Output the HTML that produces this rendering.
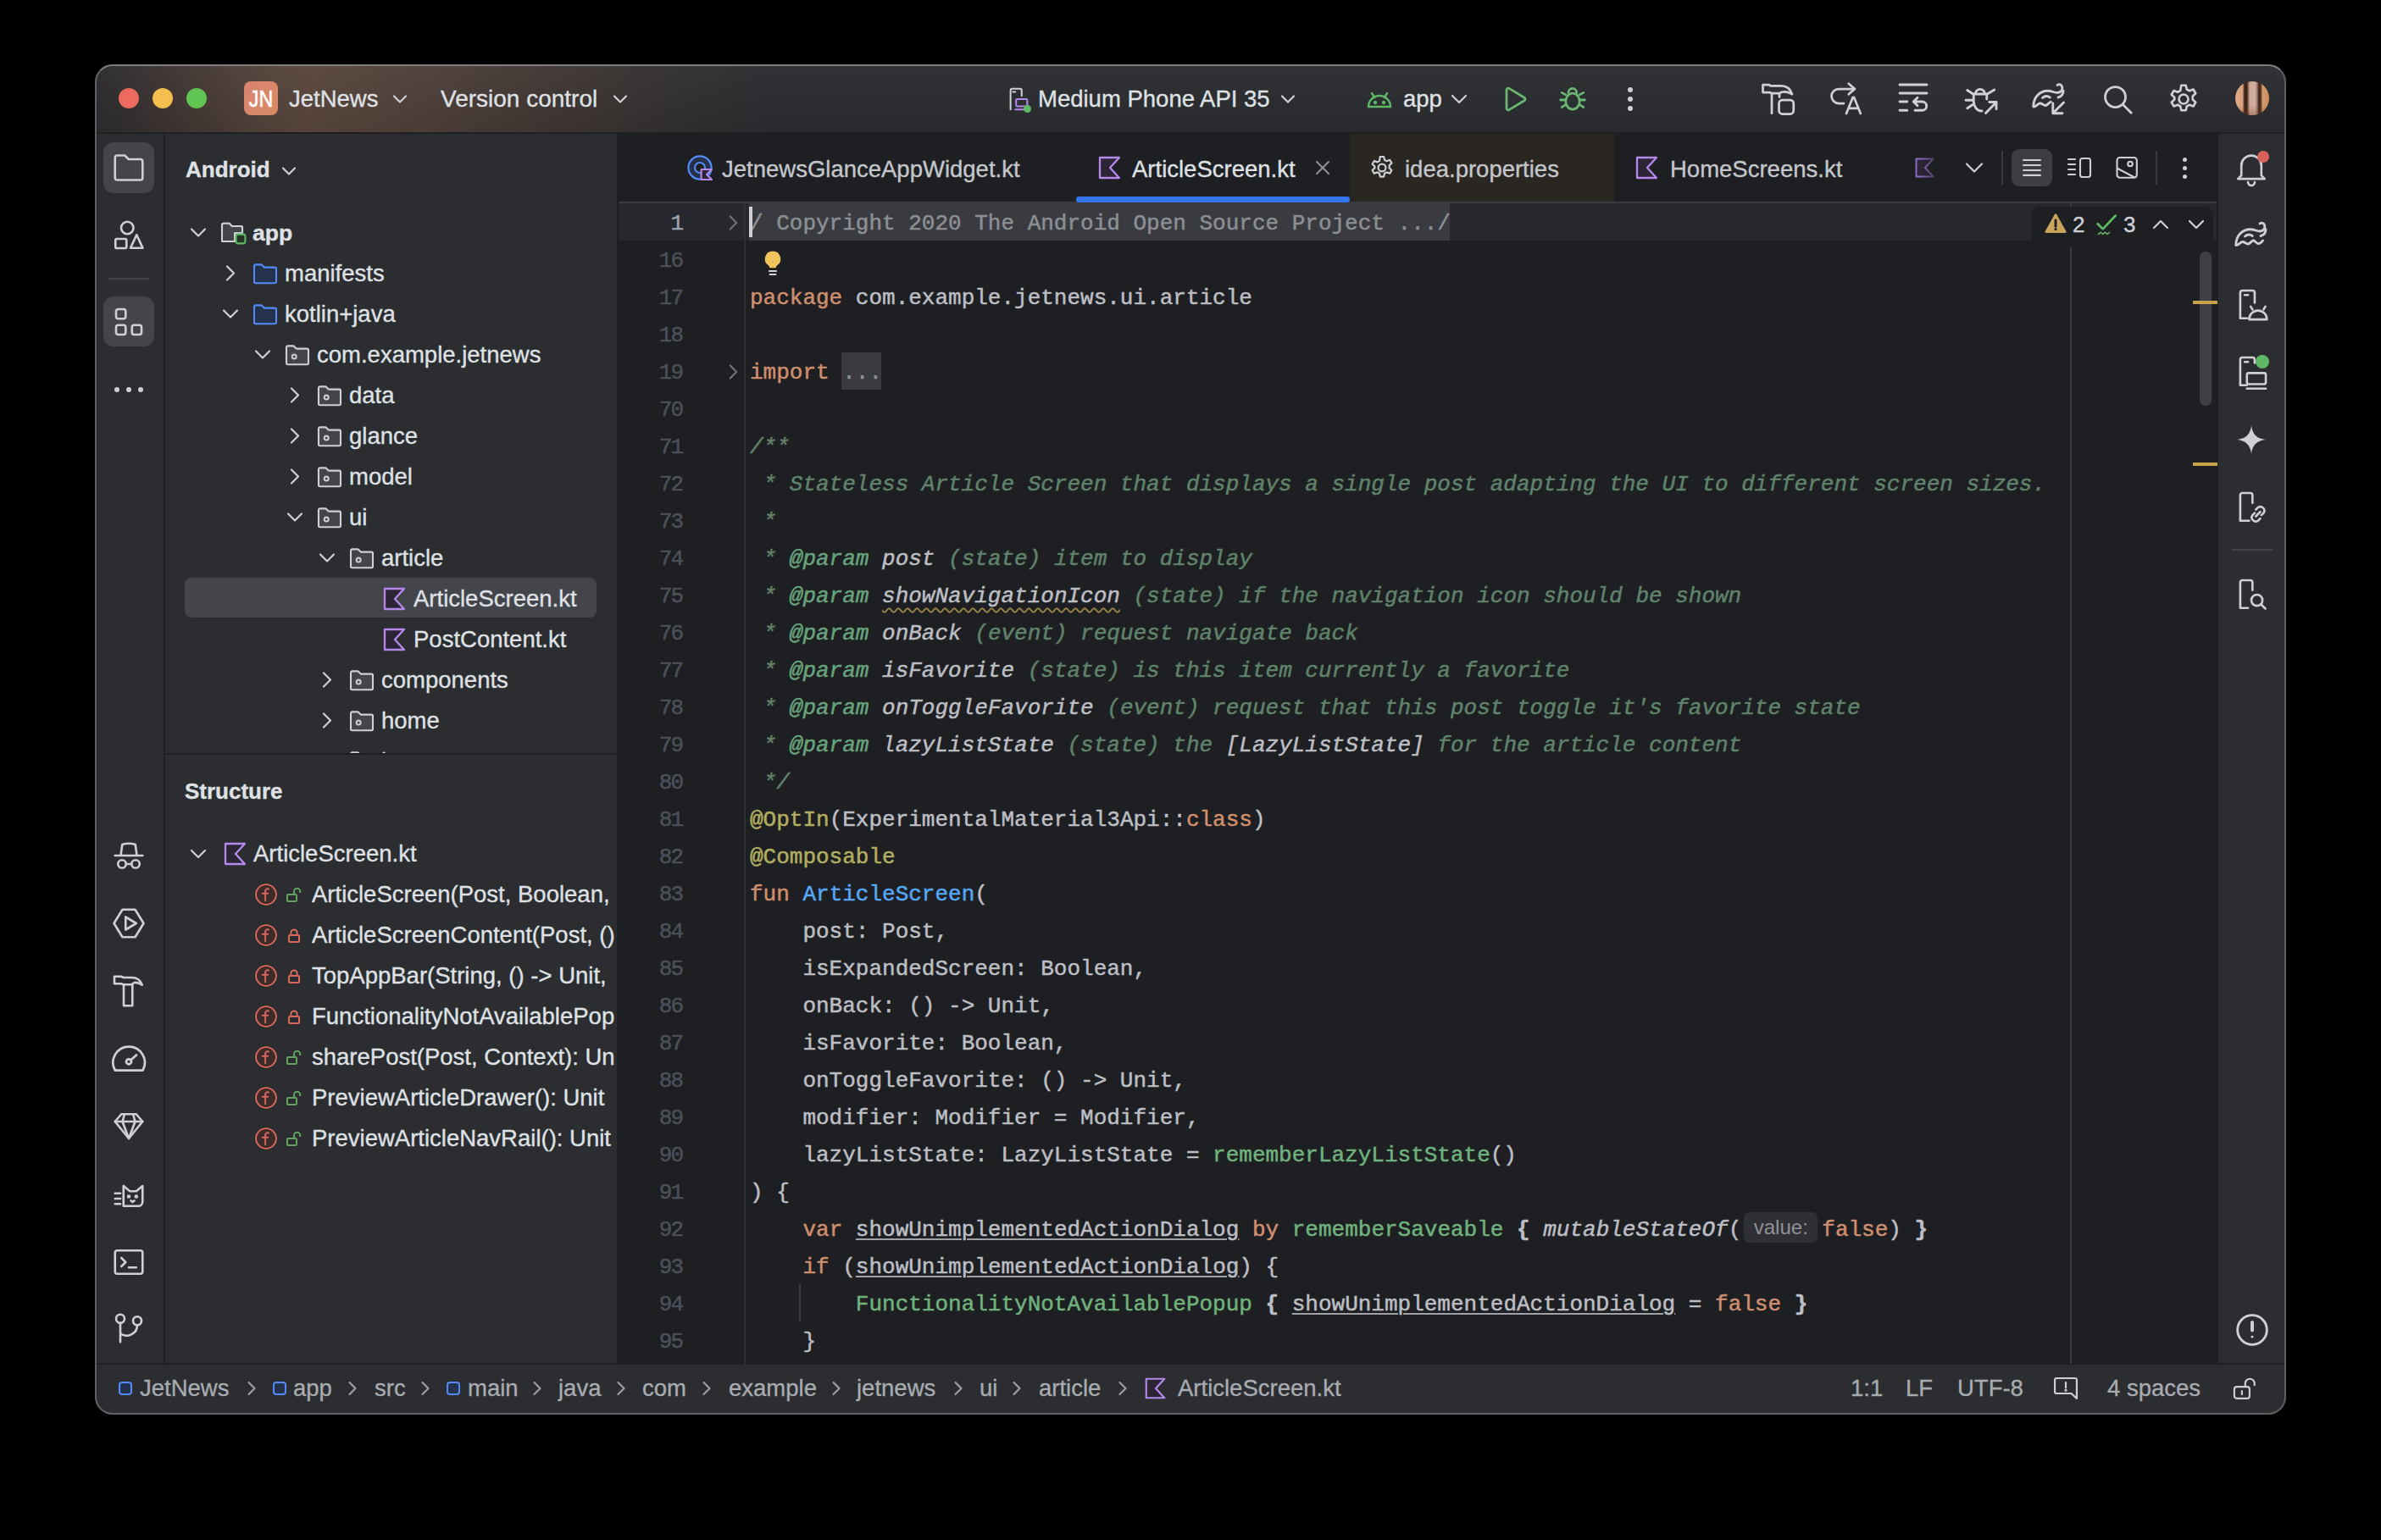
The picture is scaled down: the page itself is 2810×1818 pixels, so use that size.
<!DOCTYPE html><html><head><meta charset="utf-8"><style>
*{margin:0;padding:0;box-sizing:border-box}
html,body{width:2810px;height:1818px;background:#000;overflow:hidden}
body{position:relative;font-family:"Liberation Sans",sans-serif;color:#dfe1e5}
.a{position:absolute}
.t{position:absolute;white-space:pre;font-size:27.5px;line-height:40px;height:40px;color:#dfe1e5;-webkit-text-stroke:0.35px currentColor}
.m{position:absolute;white-space:pre;font-family:"Liberation Mono",monospace;font-size:26px;line-height:44px;height:44px;color:#bcbec4;-webkit-text-stroke:0.5px currentColor}
svg{position:absolute;overflow:visible}
.kw{color:#cf8e6d}.fn{color:#56a8f5}.cm{color:#5f826b;font-style:italic}.tag{color:#67a37c;font-style:italic}
.pn{color:#bcbec4;font-style:italic}.an{color:#b3ae60}.cp{color:#6fb27c}.it{font-style:italic}
.ul{text-decoration:underline;text-decoration-color:#9fa1a7;text-underline-offset:3px;text-decoration-thickness:2px}
.br{font-weight:bold}
.ln{position:absolute;font-family:"Liberation Mono",monospace;font-size:26px;line-height:44px;height:44px;color:#4b5059;text-align:right;width:80px;letter-spacing:-2px;-webkit-text-stroke:0.5px currentColor}
</style></head><body><div class="a" style="left:112px;top:76px;width:2586px;height:1594px;border-radius:21px;background:#2b2d30;overflow:hidden">
<div class="a" style="left:-112px;top:-76px;width:2810px;height:1818px">
<div class="a" style="left:112px;top:76px;width:2586px;height:80px;background:linear-gradient(180deg,rgba(255,255,255,0.025),rgba(0,0,0,0.07)),linear-gradient(90deg,#2d2c2e 0px,#3f3533 90px,#54433b 200px,#5a473d 250px,#4e3f39 400px,#3c3533 590px,#333031 690px,#2b2d30 790px);border-radius:0px;"></div>
<div class="a" style="left:112px;top:156px;width:2586px;height:2px;background:#1e1f22;border-radius:0px;"></div>
<div class="a" style="left:112px;top:158px;width:81px;height:1453px;background:#2b2d30;border-radius:0px;"></div>
<div class="a" style="left:193px;top:158px;width:2px;height:1453px;background:#1e1f22;border-radius:0px;"></div>
<div class="a" style="left:195px;top:158px;width:533px;height:1453px;background:#2b2d30;border-radius:0px;"></div>
<div class="a" style="left:728px;top:158px;width:2px;height:1453px;background:#1e1f22;border-radius:0px;"></div>
<div class="a" style="left:730px;top:158px;width:1886px;height:1453px;background:#1e1f22;border-radius:0px;"></div>
<div class="a" style="left:2616px;top:158px;width:2px;height:1453px;background:#1e1f22;border-radius:0px;"></div>
<div class="a" style="left:2618px;top:158px;width:80px;height:1453px;background:#2b2d30;border-radius:0px;"></div>
<div class="a" style="left:112px;top:1609px;width:2586px;height:2px;background:#1e1f22;border-radius:0px;"></div>
<div class="a" style="left:112px;top:1611px;width:2586px;height:59px;background:#2b2d30;border-radius:0px;"></div>
<div class="a" style="left:140px;top:104px;width:24px;height:24px;border-radius:50%;background:#ed6a5e"></div>
<div class="a" style="left:180px;top:104px;width:24px;height:24px;border-radius:50%;background:#f5bf4f"></div>
<div class="a" style="left:220px;top:104px;width:24px;height:24px;border-radius:50%;background:#61c554"></div>
<div class="a" style="left:288px;top:96px;width:40px;height:40px;background:linear-gradient(135deg,#d98470,#d98a64);border-radius:8px;"></div>
<div class="t" style="left:288px;top:97px;width:40px;text-align:center;font-size:27px;color:#fff;transform:scaleX(0.86);-webkit-text-stroke:0.6px #fff">JN</div>
<div class="t" style="left:341px;top:97px;font-size:27.5px;color:#dfe1e5;">JetNews</div>
<svg style="left:0;top:0" width="2810" height="1818"><path d="M465.0,113.5 L472,120.5 L479.0,113.5" fill="none" stroke="#ced0d6" stroke-width="2.2" stroke-linecap="round" stroke-linejoin="round"/></svg>
<div class="t" style="left:520px;top:97px;font-size:28px;">Version control</div>
<svg style="left:0;top:0" width="2810" height="1818"><path d="M725.0,113.5 L732,120.5 L739.0,113.5" fill="none" stroke="#ced0d6" stroke-width="2.2" stroke-linecap="round" stroke-linejoin="round"/></svg>
<svg style="left:1187.0px;top:102.0px;" width="30" height="30" viewBox="0 0 16 16" fill="none" stroke="#ced0d6" stroke-width="1.1" stroke-linecap="round" stroke-linejoin="round"><path d="M3 14.5V2.5a1 1 0 0 1 1-1h5a1 1 0 0 1 1 1V6"/><path d="M4.5 3.5h1.5"/></svg>
<svg style="left:1187.0px;top:102.0px;" width="30" height="30" viewBox="0 0 16 16" fill="none" stroke="#b589ec" stroke-width="1.1" stroke-linecap="round" stroke-linejoin="round"><rect x="6.5" y="8" width="7" height="4.5" rx="0.6"/><path d="M6 14.5h8"/></svg>
<div class="a" style="left:1208px;top:124px;width:9px;height:9px;border-radius:50%;background:#5fb865"></div>
<div class="t" style="left:1225px;top:97px;font-size:27.5px;">Medium Phone API 35</div>
<svg style="left:0;top:0" width="2810" height="1818"><path d="M1513.0,113.5 L1520,120.5 L1527.0,113.5" fill="none" stroke="#ced0d6" stroke-width="2.2" stroke-linecap="round" stroke-linejoin="round"/></svg>
<svg style="left:1612.0px;top:101.0px;" width="32" height="32" viewBox="0 0 16 16" fill="none" stroke="#5fb865" stroke-width="1.2" stroke-linecap="round" stroke-linejoin="round"><path d="M1.5 12.5a6.5 6.5 0 0 1 13 0z"/><path d="M3.5 4.5l1.6 2.6M12.5 4.5l-1.6 2.6"/><circle cx="5.5" cy="10" r="0.5" fill="#5fb865"/><circle cx="10.5" cy="10" r="0.5" fill="#5fb865"/></svg>
<div class="t" style="left:1656px;top:97px;font-size:27.5px;">app</div>
<svg style="left:0;top:0" width="2810" height="1818"><path d="M1714.0,113.0 L1722,121.0 L1730.0,113.0" fill="none" stroke="#ced0d6" stroke-width="2.2" stroke-linecap="round" stroke-linejoin="round"/></svg>
<svg style="left:1773.0px;top:101.0px;" width="32" height="32" viewBox="0 0 16 16" fill="none" stroke="#6bb673" stroke-width="1.4" stroke-linecap="round" stroke-linejoin="round"><path d="M2.5 2.6a1 1 0 0 1 1.5-.9l9 5.4a1 1 0 0 1 0 1.8l-9 5.4a1 1 0 0 1-1.5-.9z"/></svg>
<svg style="left:1838.0px;top:100.0px;" width="34" height="34" viewBox="0 0 16 16" fill="none" stroke="#6bb673" stroke-width="1.3" stroke-linecap="round" stroke-linejoin="round"><ellipse cx="8.47" cy="9.2" rx="3.85" ry="4.45"/><path d="M6.1 4.4a2.3 2.3 0 0 1 4.6 0M2.45 4.4l2.1 1.1M1.74 8.47h2.73M2.45 12.5l2.1-1.4M14.5 4.4l-2.1 1.1M15.2 8.47h-2.7M14.5 12.5l-2.1-1.4"/></svg>
<div class="a" style="left:1921px;top:103px;width:6px;height:6px;border-radius:50%;background:#ced0d6"></div>
<div class="a" style="left:1921px;top:114px;width:6px;height:6px;border-radius:50%;background:#ced0d6"></div>
<div class="a" style="left:1921px;top:125px;width:6px;height:6px;border-radius:50%;background:#ced0d6"></div>
<svg style="left:2078.0px;top:97.0px;" width="40" height="40" viewBox="0 0 16 16" fill="none" stroke="#ced0d6" stroke-width="1.1" stroke-linecap="round" stroke-linejoin="round"><path d="M1 1.2h2.8l.8.5h5q4 0 5.2 4q-1.6-1.2-3.8-1.2q-1.3 0-2 .7H5l-.8-.4H1z"/><path d="M5.2 5.4v9.3M8.8 5.4v1.6"/><rect x="8.6" y="8.4" width="6.9" height="6.6" rx="1.6"/></svg>
<svg style="left:2157.0px;top:97.0px;" width="40" height="40" viewBox="0 0 16 16" fill="none" stroke="#ced0d6" stroke-width="1.1" stroke-linecap="round" stroke-linejoin="round"><path d="M7.6 10H5.2a3.4 3.4 0 0 1 0-6.8h7.6M9.9.7l2.9 2.5-2.9 2.5"/><path d="M8.8 14.8l3.1-7.7h.5l3.1 7.7M9.9 12.3h4.5"/></svg>
<svg style="left:2237.0px;top:97.0px;" width="40" height="40" viewBox="0 0 16 16" fill="none" stroke="#ced0d6" stroke-width="1.15" stroke-linecap="round" stroke-linejoin="round"><path d="M2 1.2h12.8M2 5.2h12.8M2 9.2h3.5M2 13.3h3.5M9.2 13.3h3.4a2.05 2.05 0 0 0 0-4.1H8.6M10.4 7.3l-1.9 1.9 1.9 1.9"/></svg>
<svg style="left:2318.0px;top:97.0px;" width="40" height="40" viewBox="0 0 16 16" fill="none" stroke="#ced0d6" stroke-width="1.15" stroke-linecap="round" stroke-linejoin="round"><path d="M4.5 6.4v2.6a3.6 4.6 0 0 0 3.6 4.6h.3M10.7 6.4V8M4.2 5.6h6.7M5.3 5.6a2.25 2.25 0 0 1 4.5 0M1.5 3.8l2.9 1.9M.8 8.5h3.6M1.5 12.3l2.9-1.9M14.3 3.6l-3.2 1.9M10.2 14.6l5-5.1M11.9 9.4h3.3v3.3"/></svg>
<svg style="left:2398.0px;top:97.0px;" width="40" height="40" viewBox="0 0 16 16" fill="none" stroke="#ced0d6" stroke-width="1.15" stroke-linecap="round" stroke-linejoin="round"><path d="M.7 11.6C.7 7.2 3.6 4.1 7.5 4.1c2 0 3 .9 4.5.9 1.6 0 2.6-1.2 2.3-2.7-.3-1.2-1.5-1.6-2.3-.9M12.4 7.2c1.4-.4 2.4-1.6 2.4-3.1M.7 11.6c1.4 0 2.1-1.6 3.2-1.6 1 0 1.5 1 2.5 1 .9 0 1.6-1.4 2.5-1.7M5 7.4c1-.9 2.4-1 3.5-.2"/><path d="M15 9.6l-5 5M9.9 10v4.7h4.5"/></svg>
<svg style="left:2479.0px;top:97.0px;" width="40" height="40" viewBox="0 0 16 16" fill="none" stroke="#ced0d6" stroke-width="1.1" stroke-linecap="round" stroke-linejoin="round"><circle cx="7" cy="7" r="4.8"/><path d="M10.5 10.5l4 4"/></svg>
<svg style="left:2557.0px;top:97.0px;" width="40" height="40" viewBox="0 0 16 16" fill="none" stroke="#ced0d6" stroke-width="1.05" stroke-linecap="round" stroke-linejoin="round"><circle cx="8" cy="8" r="2.2"/><path d="M6.9 1.5h2.2l.4 1.9 1.3.7 1.8-.7 1.1 1.9-1.4 1.3v1.6l1.4 1.3-1.1 1.9-1.8-.7-1.3.7-.4 1.9H6.9l-.4-1.9-1.3-.7-1.8.7-1.1-1.9 1.4-1.3V7.2L2.3 5.9l1.1-1.9 1.8.7 1.3-.7z"/></svg>
<div class="a" style="left:2638px;top:96px;width:40px;height:40px;border-radius:50%;background:linear-gradient(180deg,rgba(0,0,0,0) 70%,rgba(120,50,30,0.35) 100%),linear-gradient(90deg,#e0a988 0%,#d9a07e 22%,#5a3a28 26%,#2a1a12 32%,#7a5848 38%,#cfaa9a 42%,#d2b0a2 58%,#a88070 64%,#3a2418 70%,#5a3a28 76%,#d49a70 80%,#cc8c5c 100%)"></div>
<div class="a" style="left:122px;top:168px;width:60px;height:60px;background:#43454a;border-radius:12px;"></div>
<svg style="left:132.0px;top:178.0px;" width="40" height="40" viewBox="0 0 16 16" fill="none" stroke="#ced0d6" stroke-width="1.05" stroke-linecap="round" stroke-linejoin="round"><path d="M1.5 3.2a1 1 0 0 1 1-1h3.6l1.8 1.8h5.6a1 1 0 0 1 1 1v7.8a1 1 0 0 1-1 1H2.5a1 1 0 0 1-1-1z"/></svg>
<svg style="left:132.0px;top:257.0px;" width="40" height="40" viewBox="0 0 16 16" fill="none" stroke="#ced0d6" stroke-width="1.05" stroke-linecap="round" stroke-linejoin="round"><circle cx="7.3" cy="4.8" r="2.9"/><rect x="1.7" y="10" width="5.2" height="4.4" rx=".6"/><path d="M8.8 14.3l2.9-6.2 2.9 6.2z"/></svg>
<div class="a" style="left:128px;top:328px;width:48px;height:2px;background:#43454a;border-radius:0px;"></div>
<div class="a" style="left:122px;top:350px;width:60px;height:59px;background:#43454a;border-radius:12px;"></div>
<svg style="left:132.0px;top:360.0px;" width="40" height="40" viewBox="0 0 16 16" fill="none" stroke="#ced0d6" stroke-width="1.05" stroke-linecap="round" stroke-linejoin="round"><rect x="2" y="2" width="4.5" height="4.5" rx="1"/><rect x="2" y="9.5" width="4.5" height="4.5" rx="1"/><rect x="9.5" y="9.5" width="4.5" height="4.5" rx="1"/></svg>
<div class="a" style="left:135px;top:457px;width:6px;height:6px;border-radius:50%;background:#ced0d6"></div>
<div class="a" style="left:149px;top:457px;width:6px;height:6px;border-radius:50%;background:#ced0d6"></div>
<div class="a" style="left:163px;top:457px;width:6px;height:6px;border-radius:50%;background:#ced0d6"></div>
<svg style="left:132.0px;top:990.0px;" width="40" height="40" viewBox="0 0 16 16" fill="none" stroke="#ced0d6" stroke-width="1.05" stroke-linecap="round" stroke-linejoin="round"><path d="M1.5 8h13M4.2 8l.7-5.2q3.1-1 6.2 0l.7 5.2"/><circle cx="4.8" cy="12" r="1.9"/><circle cx="11.2" cy="12" r="1.9"/><path d="M6.7 12h2.6"/></svg>
<svg style="left:132.0px;top:1070.0px;" width="40" height="40" viewBox="0 0 16 16" fill="none" stroke="#ced0d6" stroke-width="1.05" stroke-linecap="round" stroke-linejoin="round"><path d="M5 1.5h6l4 6.5-4 6.5H5L1 8z"/><path d="M6.5 5v6l5-3z"/></svg>
<svg style="left:132.0px;top:1149.0px;" width="40" height="40" viewBox="0 0 16 16" fill="none" stroke="#ced0d6" stroke-width="1.05" stroke-linecap="round" stroke-linejoin="round"><path d="M1.2 1.5h3.2l1 .5h4q3.7 0 4.9 3.5q-1.9-1.3-3.7-1.1l-1.3.9H5.4l-1-.4H1.2z"/><path d="M5.6 5.3v10h4.1v-10"/></svg>
<svg style="left:132.0px;top:1230.0px;" width="40" height="40" viewBox="0 0 16 16" fill="none" stroke="#ced0d6" stroke-width="1.1" stroke-linecap="round" stroke-linejoin="round"><path d="M1.5 13.4A7.5 7.5 0 1 1 14.6 13.4z"/><path d="M9 8.5l2.6-2.3"/><circle cx="8" cy="9.3" r="1.2"/></svg>
<svg style="left:132.0px;top:1309.0px;" width="40" height="40" viewBox="0 0 16 16" fill="none" stroke="#ced0d6" stroke-width="1.05" stroke-linecap="round" stroke-linejoin="round"><path d="M4.5 2.5h7L14.5 6 8 14 1.5 6z"/><path d="M1.5 6h13M6 2.5 5 6l3 8 3-8-1-3.5"/></svg>
<svg style="left:132.0px;top:1390.0px;" width="40" height="40" viewBox="0 0 16 16" fill="none" stroke="#ced0d6" stroke-width="1.05" stroke-linecap="round" stroke-linejoin="round"><path d="M5.5 13.5h7a2 2 0 0 0 2-2V4l-3 2.5h-3L5.5 4v9.5"/><path d="M1.5 7.5h2.5M1.5 10h2.5M1.5 12.5h2.5"/><circle cx="8" cy="9" r=".4"/><circle cx="11.5" cy="9" r=".4"/><path d="M9 11l.8.6.8-.6"/></svg>
<svg style="left:132.0px;top:1470.0px;" width="40" height="40" viewBox="0 0 16 16" fill="none" stroke="#ced0d6" stroke-width="1.05" stroke-linecap="round" stroke-linejoin="round"><rect x="1.5" y="2.5" width="13" height="11" rx="1"/><path d="M4.5 6l2 2-2 2M8 10.5h3.5"/></svg>
<svg style="left:132.0px;top:1548.0px;" width="40" height="40" viewBox="0 0 16 16" fill="none" stroke="#ced0d6" stroke-width="1.05" stroke-linecap="round" stroke-linejoin="round"><circle cx="4" cy="3.5" r="2"/><circle cx="12" cy="4.5" r="2"/><path d="M4 5.5v9M12 6.5a5 5 0 0 1-8 4"/></svg>
<div class="t" style="left:219px;top:180px;font-size:26px;font-weight:bold;">Android</div>
<svg style="left:0;top:0" width="2810" height="1818"><path d="M334.0,198.5 L341,205.5 L348.0,198.5" fill="none" stroke="#ced0d6" stroke-width="2.2" stroke-linecap="round" stroke-linejoin="round"/></svg>
<div class="a" style="left:218px;top:682px;width:486px;height:47px;background:#43454a;border-radius:8px;"></div>
<div class="a" style="left:195px;top:240px;width:533px;height:649px;overflow:hidden">
<div class="a" style="left:-195px;top:-240px;width:2810px;height:1818px">
<svg style="left:0;top:0" width="2810" height="1818"><path d="M226.0,270.5 L234,278.5 L242.0,270.5" fill="none" stroke="#ced0d6" stroke-width="2.2" stroke-linecap="round" stroke-linejoin="round"/></svg>
<svg style="left:260px;top:258.5px" width="32" height="32" viewBox="0 0 16 16"><path d="M1 3.2a.8.8 0 0 1 .8-.8h3.5l1.6 1.6h5.3a.8.8 0 0 1 .8.8v2.4M8 13H1.8a.8.8 0 0 1-.8-.8z" fill="#43454a" stroke="#ced0d6" stroke-width="1.05"/><path d="M1 3.2a.8.8 0 0 1 .8-.8h3.5l1.6 1.6h5.3a.8.8 0 0 1 .8.8V8H8.5v5H1.8a.8.8 0 0 1-.8-.8z" fill="#43454a" stroke="#ced0d6" stroke-width="1.05" stroke-linejoin="round"/><rect x="9.3" y="8.8" width="5.4" height="5.4" rx="1.2" fill="#253627" stroke="#5fb865" stroke-width="1.05"/></svg>
<div class="t" style="left:298px;top:254.5px;font-size:26.5px;font-weight:bold;">app</div>
<svg style="left:0;top:0" width="2810" height="1818"><path d="M268.0,314.5 L276.0,322.5 L268.0,330.5" fill="none" stroke="#ced0d6" stroke-width="2.2" stroke-linecap="round" stroke-linejoin="round"/></svg>
<svg style="left:298px;top:306.5px" width="32" height="32" viewBox="0 0 16 16"><path d="M1 3.5a.8.8 0 0 1 .8-.8h3.5l1.6 1.6h6.3a.8.8 0 0 1 .8.8v7.7a.8.8 0 0 1-.8.8H1.8a.8.8 0 0 1-.8-.8z" fill="#25324d" stroke="#548af7" stroke-width="1.05" stroke-linejoin="round"/></svg>
<div class="t" style="left:336px;top:302.5px;font-size:27.5px;">manifests</div>
<svg style="left:0;top:0" width="2810" height="1818"><path d="M264.0,366.5 L272,374.5 L280.0,366.5" fill="none" stroke="#ced0d6" stroke-width="2.2" stroke-linecap="round" stroke-linejoin="round"/></svg>
<svg style="left:298px;top:354.5px" width="32" height="32" viewBox="0 0 16 16"><path d="M1 3.5a.8.8 0 0 1 .8-.8h3.5l1.6 1.6h6.3a.8.8 0 0 1 .8.8v7.7a.8.8 0 0 1-.8.8H1.8a.8.8 0 0 1-.8-.8z" fill="#25324d" stroke="#548af7" stroke-width="1.05" stroke-linejoin="round"/></svg>
<div class="t" style="left:336px;top:350.5px;font-size:27.5px;">kotlin+java</div>
<svg style="left:0;top:0" width="2810" height="1818"><path d="M302.0,414.5 L310,422.5 L318.0,414.5" fill="none" stroke="#ced0d6" stroke-width="2.2" stroke-linecap="round" stroke-linejoin="round"/></svg>
<svg style="left:336px;top:402.5px" width="32" height="32" viewBox="0 0 16 16"><path d="M1 3.5a.8.8 0 0 1 .8-.8h3.5l1.6 1.6h6.3a.8.8 0 0 1 .8.8v7.7a.8.8 0 0 1-.8.8H1.8a.8.8 0 0 1-.8-.8z" fill="#43454a" stroke="#ced0d6" stroke-width="1.05" stroke-linejoin="round"/><circle cx="5.6" cy="9" r="1.25" fill="none" stroke="#ced0d6" stroke-width="1"/></svg>
<div class="t" style="left:374px;top:398.5px;font-size:27.5px;">com.example.jetnews</div>
<svg style="left:0;top:0" width="2810" height="1818"><path d="M344.0,458.5 L352.0,466.5 L344.0,474.5" fill="none" stroke="#ced0d6" stroke-width="2.2" stroke-linecap="round" stroke-linejoin="round"/></svg>
<svg style="left:374px;top:450.5px" width="32" height="32" viewBox="0 0 16 16"><path d="M1 3.5a.8.8 0 0 1 .8-.8h3.5l1.6 1.6h6.3a.8.8 0 0 1 .8.8v7.7a.8.8 0 0 1-.8.8H1.8a.8.8 0 0 1-.8-.8z" fill="#43454a" stroke="#ced0d6" stroke-width="1.05" stroke-linejoin="round"/><circle cx="5.6" cy="9" r="1.25" fill="none" stroke="#ced0d6" stroke-width="1"/></svg>
<div class="t" style="left:412px;top:446.5px;font-size:27.5px;">data</div>
<svg style="left:0;top:0" width="2810" height="1818"><path d="M344.0,506.5 L352.0,514.5 L344.0,522.5" fill="none" stroke="#ced0d6" stroke-width="2.2" stroke-linecap="round" stroke-linejoin="round"/></svg>
<svg style="left:374px;top:498.5px" width="32" height="32" viewBox="0 0 16 16"><path d="M1 3.5a.8.8 0 0 1 .8-.8h3.5l1.6 1.6h6.3a.8.8 0 0 1 .8.8v7.7a.8.8 0 0 1-.8.8H1.8a.8.8 0 0 1-.8-.8z" fill="#43454a" stroke="#ced0d6" stroke-width="1.05" stroke-linejoin="round"/><circle cx="5.6" cy="9" r="1.25" fill="none" stroke="#ced0d6" stroke-width="1"/></svg>
<div class="t" style="left:412px;top:494.5px;font-size:27.5px;">glance</div>
<svg style="left:0;top:0" width="2810" height="1818"><path d="M344.0,554.5 L352.0,562.5 L344.0,570.5" fill="none" stroke="#ced0d6" stroke-width="2.2" stroke-linecap="round" stroke-linejoin="round"/></svg>
<svg style="left:374px;top:546.5px" width="32" height="32" viewBox="0 0 16 16"><path d="M1 3.5a.8.8 0 0 1 .8-.8h3.5l1.6 1.6h6.3a.8.8 0 0 1 .8.8v7.7a.8.8 0 0 1-.8.8H1.8a.8.8 0 0 1-.8-.8z" fill="#43454a" stroke="#ced0d6" stroke-width="1.05" stroke-linejoin="round"/><circle cx="5.6" cy="9" r="1.25" fill="none" stroke="#ced0d6" stroke-width="1"/></svg>
<div class="t" style="left:412px;top:542.5px;font-size:27.5px;">model</div>
<svg style="left:0;top:0" width="2810" height="1818"><path d="M340.0,606.5 L348,614.5 L356.0,606.5" fill="none" stroke="#ced0d6" stroke-width="2.2" stroke-linecap="round" stroke-linejoin="round"/></svg>
<svg style="left:374px;top:594.5px" width="32" height="32" viewBox="0 0 16 16"><path d="M1 3.5a.8.8 0 0 1 .8-.8h3.5l1.6 1.6h6.3a.8.8 0 0 1 .8.8v7.7a.8.8 0 0 1-.8.8H1.8a.8.8 0 0 1-.8-.8z" fill="#43454a" stroke="#ced0d6" stroke-width="1.05" stroke-linejoin="round"/><circle cx="5.6" cy="9" r="1.25" fill="none" stroke="#ced0d6" stroke-width="1"/></svg>
<div class="t" style="left:412px;top:590.5px;font-size:27.5px;">ui</div>
<svg style="left:0;top:0" width="2810" height="1818"><path d="M378.0,654.5 L386,662.5 L394.0,654.5" fill="none" stroke="#ced0d6" stroke-width="2.2" stroke-linecap="round" stroke-linejoin="round"/></svg>
<svg style="left:412px;top:642.5px" width="32" height="32" viewBox="0 0 16 16"><path d="M1 3.5a.8.8 0 0 1 .8-.8h3.5l1.6 1.6h6.3a.8.8 0 0 1 .8.8v7.7a.8.8 0 0 1-.8.8H1.8a.8.8 0 0 1-.8-.8z" fill="#43454a" stroke="#ced0d6" stroke-width="1.05" stroke-linejoin="round"/><circle cx="5.6" cy="9" r="1.25" fill="none" stroke="#ced0d6" stroke-width="1"/></svg>
<div class="t" style="left:450px;top:638.5px;font-size:27.5px;">article</div>
<svg style="left:450px;top:690.5px" width="32" height="32" viewBox="0 0 16 16"><path d="M2 2h11.5L8 8l5.5 6H2z" fill="#2b2536" stroke="#b589ec" stroke-width="1.15" stroke-linejoin="round"/></svg>
<div class="t" style="left:488px;top:686.5px;font-size:27.5px;">ArticleScreen.kt</div>
<svg style="left:450px;top:738.5px" width="32" height="32" viewBox="0 0 16 16"><path d="M2 2h11.5L8 8l5.5 6H2z" fill="#2b2536" stroke="#b589ec" stroke-width="1.15" stroke-linejoin="round"/></svg>
<div class="t" style="left:488px;top:734.5px;font-size:27.5px;">PostContent.kt</div>
<svg style="left:0;top:0" width="2810" height="1818"><path d="M382.0,794.5 L390.0,802.5 L382.0,810.5" fill="none" stroke="#ced0d6" stroke-width="2.2" stroke-linecap="round" stroke-linejoin="round"/></svg>
<svg style="left:412px;top:786.5px" width="32" height="32" viewBox="0 0 16 16"><path d="M1 3.5a.8.8 0 0 1 .8-.8h3.5l1.6 1.6h6.3a.8.8 0 0 1 .8.8v7.7a.8.8 0 0 1-.8.8H1.8a.8.8 0 0 1-.8-.8z" fill="#43454a" stroke="#ced0d6" stroke-width="1.05" stroke-linejoin="round"/><circle cx="5.6" cy="9" r="1.25" fill="none" stroke="#ced0d6" stroke-width="1"/></svg>
<div class="t" style="left:450px;top:782.5px;font-size:27.5px;">components</div>
<svg style="left:0;top:0" width="2810" height="1818"><path d="M382.0,842.5 L390.0,850.5 L382.0,858.5" fill="none" stroke="#ced0d6" stroke-width="2.2" stroke-linecap="round" stroke-linejoin="round"/></svg>
<svg style="left:412px;top:834.5px" width="32" height="32" viewBox="0 0 16 16"><path d="M1 3.5a.8.8 0 0 1 .8-.8h3.5l1.6 1.6h6.3a.8.8 0 0 1 .8.8v7.7a.8.8 0 0 1-.8.8H1.8a.8.8 0 0 1-.8-.8z" fill="#43454a" stroke="#ced0d6" stroke-width="1.05" stroke-linejoin="round"/><circle cx="5.6" cy="9" r="1.25" fill="none" stroke="#ced0d6" stroke-width="1"/></svg>
<div class="t" style="left:450px;top:830.5px;font-size:27.5px;">home</div>
<svg style="left:0;top:0" width="2810" height="1818"><path d="M382.0,890.5 L390.0,898.5 L382.0,906.5" fill="none" stroke="#ced0d6" stroke-width="2.2" stroke-linecap="round" stroke-linejoin="round"/></svg>
<svg style="left:412px;top:882.5px" width="32" height="32" viewBox="0 0 16 16"><path d="M1 3.5a.8.8 0 0 1 .8-.8h3.5l1.6 1.6h6.3a.8.8 0 0 1 .8.8v7.7a.8.8 0 0 1-.8.8H1.8a.8.8 0 0 1-.8-.8z" fill="#43454a" stroke="#ced0d6" stroke-width="1.05" stroke-linejoin="round"/><circle cx="5.6" cy="9" r="1.25" fill="none" stroke="#ced0d6" stroke-width="1"/></svg>
<div class="t" style="left:450px;top:878.5px;font-size:27.5px;">interests</div>
</div></div>
<div class="a" style="left:195px;top:889px;width:533px;height:2px;background:#1e1f22;border-radius:0px;"></div>
<div class="t" style="left:218px;top:914px;font-size:26px;font-weight:bold;">Structure</div>
<svg style="left:0;top:0" width="2810" height="1818"><path d="M226.0,1004.0 L234,1012.0 L242.0,1004.0" fill="none" stroke="#ced0d6" stroke-width="2.2" stroke-linecap="round" stroke-linejoin="round"/></svg>
<svg style="left:262px;top:992.0px" width="32" height="32" viewBox="0 0 16 16"><path d="M2 2h11.5L8 8l5.5 6H2z" fill="#2b2536" stroke="#b589ec" stroke-width="1.15" stroke-linejoin="round"/></svg>
<div class="t" style="left:299px;top:988px;font-size:27.5px;">ArticleScreen.kt</div>
<div class="a" style="left:195px;top:890px;width:533px;height:719px;overflow:hidden">
<div class="a" style="left:-195px;top:-890px;width:2810px;height:1818px">
<svg style="left:299.5px;top:1042px" width="28" height="28" viewBox="0 0 16 16"><circle cx="8" cy="8" r="6.8" fill="#3d2b2a" stroke="#d86a5b" stroke-width="1.1"/><path d="M9.8 4.3c-.9-.4-2.1-.2-2.3 1V12M5.5 7.3h3.7" fill="none" stroke="#d86a5b" stroke-width="1.1" stroke-linecap="round"/></svg>
<svg style="left:337px;top:1046px" width="20" height="20" viewBox="0 0 10 10"><rect x="1" y="5" width="5.5" height="4" rx=".6" fill="none" stroke="#62a463" stroke-width="1"/><path d="M5 5V3.2a1.8 1.8 0 0 1 3.6 0v.8" fill="none" stroke="#62a463" stroke-width="1"/></svg>
<div class="t" style="left:368px;top:1036px;font-size:27.5px;">ArticleScreen(Post, Boolean,</div>
<svg style="left:299.5px;top:1090px" width="28" height="28" viewBox="0 0 16 16"><circle cx="8" cy="8" r="6.8" fill="#3d2b2a" stroke="#d86a5b" stroke-width="1.1"/><path d="M9.8 4.3c-.9-.4-2.1-.2-2.3 1V12M5.5 7.3h3.7" fill="none" stroke="#d86a5b" stroke-width="1.1" stroke-linecap="round"/></svg>
<svg style="left:337px;top:1094px" width="20" height="20" viewBox="0 0 10 10"><rect x="2" y="5" width="6" height="4" rx=".6" fill="none" stroke="#d86a5b" stroke-width="1"/><path d="M3.2 5V3.5a1.8 1.8 0 0 1 3.6 0V5" fill="none" stroke="#d86a5b" stroke-width="1"/></svg>
<div class="t" style="left:368px;top:1084px;font-size:27.5px;">ArticleScreenContent(Post, ()</div>
<svg style="left:299.5px;top:1138px" width="28" height="28" viewBox="0 0 16 16"><circle cx="8" cy="8" r="6.8" fill="#3d2b2a" stroke="#d86a5b" stroke-width="1.1"/><path d="M9.8 4.3c-.9-.4-2.1-.2-2.3 1V12M5.5 7.3h3.7" fill="none" stroke="#d86a5b" stroke-width="1.1" stroke-linecap="round"/></svg>
<svg style="left:337px;top:1142px" width="20" height="20" viewBox="0 0 10 10"><rect x="2" y="5" width="6" height="4" rx=".6" fill="none" stroke="#d86a5b" stroke-width="1"/><path d="M3.2 5V3.5a1.8 1.8 0 0 1 3.6 0V5" fill="none" stroke="#d86a5b" stroke-width="1"/></svg>
<div class="t" style="left:368px;top:1132px;font-size:27.5px;">TopAppBar(String, () -&gt; Unit,</div>
<svg style="left:299.5px;top:1186px" width="28" height="28" viewBox="0 0 16 16"><circle cx="8" cy="8" r="6.8" fill="#3d2b2a" stroke="#d86a5b" stroke-width="1.1"/><path d="M9.8 4.3c-.9-.4-2.1-.2-2.3 1V12M5.5 7.3h3.7" fill="none" stroke="#d86a5b" stroke-width="1.1" stroke-linecap="round"/></svg>
<svg style="left:337px;top:1190px" width="20" height="20" viewBox="0 0 10 10"><rect x="2" y="5" width="6" height="4" rx=".6" fill="none" stroke="#d86a5b" stroke-width="1"/><path d="M3.2 5V3.5a1.8 1.8 0 0 1 3.6 0V5" fill="none" stroke="#d86a5b" stroke-width="1"/></svg>
<div class="t" style="left:368px;top:1180px;font-size:27.5px;">FunctionalityNotAvailablePop</div>
<svg style="left:299.5px;top:1234px" width="28" height="28" viewBox="0 0 16 16"><circle cx="8" cy="8" r="6.8" fill="#3d2b2a" stroke="#d86a5b" stroke-width="1.1"/><path d="M9.8 4.3c-.9-.4-2.1-.2-2.3 1V12M5.5 7.3h3.7" fill="none" stroke="#d86a5b" stroke-width="1.1" stroke-linecap="round"/></svg>
<svg style="left:337px;top:1238px" width="20" height="20" viewBox="0 0 10 10"><rect x="1" y="5" width="5.5" height="4" rx=".6" fill="none" stroke="#62a463" stroke-width="1"/><path d="M5 5V3.2a1.8 1.8 0 0 1 3.6 0v.8" fill="none" stroke="#62a463" stroke-width="1"/></svg>
<div class="t" style="left:368px;top:1228px;font-size:27.5px;">sharePost(Post, Context): Un</div>
<svg style="left:299.5px;top:1282px" width="28" height="28" viewBox="0 0 16 16"><circle cx="8" cy="8" r="6.8" fill="#3d2b2a" stroke="#d86a5b" stroke-width="1.1"/><path d="M9.8 4.3c-.9-.4-2.1-.2-2.3 1V12M5.5 7.3h3.7" fill="none" stroke="#d86a5b" stroke-width="1.1" stroke-linecap="round"/></svg>
<svg style="left:337px;top:1286px" width="20" height="20" viewBox="0 0 10 10"><rect x="1" y="5" width="5.5" height="4" rx=".6" fill="none" stroke="#62a463" stroke-width="1"/><path d="M5 5V3.2a1.8 1.8 0 0 1 3.6 0v.8" fill="none" stroke="#62a463" stroke-width="1"/></svg>
<div class="t" style="left:368px;top:1276px;font-size:27.5px;">PreviewArticleDrawer(): Unit</div>
<svg style="left:299.5px;top:1330px" width="28" height="28" viewBox="0 0 16 16"><circle cx="8" cy="8" r="6.8" fill="#3d2b2a" stroke="#d86a5b" stroke-width="1.1"/><path d="M9.8 4.3c-.9-.4-2.1-.2-2.3 1V12M5.5 7.3h3.7" fill="none" stroke="#d86a5b" stroke-width="1.1" stroke-linecap="round"/></svg>
<svg style="left:337px;top:1334px" width="20" height="20" viewBox="0 0 10 10"><rect x="1" y="5" width="5.5" height="4" rx=".6" fill="none" stroke="#62a463" stroke-width="1"/><path d="M5 5V3.2a1.8 1.8 0 0 1 3.6 0v.8" fill="none" stroke="#62a463" stroke-width="1"/></svg>
<div class="t" style="left:368px;top:1324px;font-size:27.5px;">PreviewArticleNavRail(): Unit</div>
</div></div>
<div class="a" style="left:730px;top:158px;width:1886px;height:81px;background:#1e1f22;border-radius:0px;"></div>
<div class="a" style="left:1593px;top:158px;width:312px;height:80px;background:#2a2722;border-radius:0px;"></div>
<div class="a" style="left:730px;top:238px;width:1886px;height:2px;background:#393b40;border-radius:0px;"></div>
<svg style="left:810px;top:182px" width="32" height="32" viewBox="0 0 16 16"><circle cx="8" cy="8" r="6.8" fill="#25304a" stroke="#548af7" stroke-width="1.1"/><circle cx="8" cy="8" r="3" fill="#1e1f22" stroke="#548af7" stroke-width="1.1"/><path d="M8.8 9h6.2l-3 3 3 3H8.8z" fill="#2b2536" stroke="#b589ec" stroke-width="1.05" stroke-linejoin="round"/></svg>
<div class="t" style="left:852px;top:179.5px;font-size:27.5px;color:#c4c6cb;">JetnewsGlanceAppWidget.kt</div>
<svg style="left:1294px;top:182.0px" width="32" height="32" viewBox="0 0 16 16"><path d="M2 2h11.5L8 8l5.5 6H2z" fill="#2b2536" stroke="#b589ec" stroke-width="1.15" stroke-linejoin="round"/></svg>
<div class="t" style="left:1336px;top:179.5px;font-size:27.5px;">ArticleScreen.kt</div>
<svg style="left:1551px;top:188px" width="20" height="20" viewBox="0 0 20 20"><path d="M3 3l14 14M17 3L3 17" stroke="#8c8e94" stroke-width="2.2" stroke-linecap="round"/></svg>
<div class="a" style="left:1270px;top:232px;width:323px;height:7px;background:#3574f0;border-radius:3px;"></div>
<svg style="left:1615.0px;top:182.0px;" width="32" height="32" viewBox="0 0 16 16" fill="none" stroke="#ced0d6" stroke-width="1.1" stroke-linecap="round" stroke-linejoin="round"><circle cx="8" cy="8" r="2.2"/><path d="M6.9 1.5h2.2l.4 1.9 1.3.7 1.8-.7 1.1 1.9-1.4 1.3v1.6l1.4 1.3-1.1 1.9-1.8-.7-1.3.7-.4 1.9H6.9l-.4-1.9-1.3-.7-1.8.7-1.1-1.9 1.4-1.3V7.2L2.3 5.9l1.1-1.9 1.8.7 1.3-.7z"/></svg>
<div class="t" style="left:1658px;top:179.5px;font-size:27.5px;color:#c4c6cb;">idea.properties</div>
<svg style="left:1928px;top:182.0px" width="32" height="32" viewBox="0 0 16 16"><path d="M2 2h11.5L8 8l5.5 6H2z" fill="#2b2536" stroke="#b589ec" stroke-width="1.15" stroke-linejoin="round"/></svg>
<div class="t" style="left:1971px;top:179.5px;font-size:27.5px;color:#c4c6cb;">HomeScreens.kt</div>
<svg style="left:2258px;top:184.0px" width="28" height="28" viewBox="0 0 16 16"><path d="M2 2h11.5L8 8l5.5 6H2z" fill="#2b2536" stroke="#8d6cc4" stroke-width="1.15" stroke-linejoin="round"/></svg>
<div class="a" style="left:2266px;top:180px;width:26px;height:36px;background:linear-gradient(90deg,rgba(30,31,34,0),rgba(30,31,34,0.95));border-radius:0px;"></div>
<svg style="left:0;top:0" width="2810" height="1818"><path d="M2321.0,193.5 L2330,202.5 L2339.0,193.5" fill="none" stroke="#ced0d6" stroke-width="2.2" stroke-linecap="round" stroke-linejoin="round"/></svg>
<div class="a" style="left:2362px;top:178px;width:2px;height:40px;background:#393b40;border-radius:0px;"></div>
<div class="a" style="left:2374px;top:176px;width:48px;height:44px;background:#3d3e42;border-radius:9px;"></div>
<svg style="left:2383.0px;top:183.0px;" width="30" height="30" viewBox="0 0 16 16" fill="none" stroke="#ced0d6" stroke-width="1.15" stroke-linecap="round" stroke-linejoin="round"><path d="M2.7 3.2h10.6M2.7 6.4h10.6M2.7 9.6h10.6M2.7 12.7h10.6"/></svg>
<svg style="left:2438.0px;top:182.0px;" width="32" height="32" viewBox="0 0 16 16" fill="none" stroke="#ced0d6" stroke-width="1.05" stroke-linecap="round" stroke-linejoin="round"><path d="M1.5 3h4M1.5 6h4M1.5 9h4M1.5 12h4"/><rect x="8.5" y="2.5" width="6" height="11" rx="1.2"/></svg>
<svg style="left:2493.0px;top:182.0px;" width="32" height="32" viewBox="0 0 16 16" fill="none" stroke="#ced0d6" stroke-width="1.05" stroke-linecap="round" stroke-linejoin="round"><rect x="2.75" y="2" width="11.65" height="11.85" rx="1.6"/><circle cx="10.5" cy="5.75" r="1.4"/><path d="M2.9 8.4l10 5.2"/></svg>
<div class="a" style="left:2544px;top:178px;width:2px;height:40px;background:#393b40;border-radius:0px;"></div>
<div class="a" style="left:2575.5px;top:185.5px;width:5px;height:5px;border-radius:50%;background:#ced0d6"></div>
<div class="a" style="left:2575.5px;top:195.5px;width:5px;height:5px;border-radius:50%;background:#ced0d6"></div>
<div class="a" style="left:2575.5px;top:205.5px;width:5px;height:5px;border-radius:50%;background:#ced0d6"></div>
<div class="a" style="left:730px;top:240px;width:1886px;height:44px;background:#26282e;border-radius:0px;"></div>
<div class="a" style="left:884px;top:240px;width:827px;height:44px;background:#393b40;border-radius:0px;"></div>
<div class="a" style="left:993px;top:416px;width:47px;height:44px;background:#393b40;border-radius:0px;"></div>
<div class="a" style="left:878px;top:240px;width:2px;height:1371px;background:#2e3035;border-radius:0px;"></div>
<div class="a" style="left:2443px;top:240px;width:2px;height:1370px;background:#393b40;border-radius:0px;"></div>
<div class="a" style="left:730px;top:240px;width:1886px;height:1369px;overflow:hidden">
<div class="a" style="left:-730px;top:-240px;width:2810px;height:1818px">
<div class="ln" style="left:725px;top:242px;color:#a1a3ab">1</div>
<div class="m" style="left:885px;top:242px"><span style="color:#8c8f94">/ Copyright 2020 The Android Open Source Project .../</span></div>
<div class="ln" style="left:725px;top:286px;color:#4b5059">16</div>
<div class="m" style="left:885px;top:286px"></div>
<div class="ln" style="left:725px;top:330px;color:#4b5059">17</div>
<div class="m" style="left:885px;top:330px"><span class="kw">package</span> com.example.jetnews.ui.article</div>
<div class="ln" style="left:725px;top:374px;color:#4b5059">18</div>
<div class="m" style="left:885px;top:374px"></div>
<div class="ln" style="left:725px;top:418px;color:#4b5059">19</div>
<div class="m" style="left:885px;top:418px"><span class="kw">import</span> <span style="color:#8c8f94">...</span></div>
<div class="ln" style="left:725px;top:462px;color:#4b5059">70</div>
<div class="m" style="left:885px;top:462px"></div>
<div class="ln" style="left:725px;top:506px;color:#4b5059">71</div>
<div class="m" style="left:885px;top:506px"><span class="cm">/**</span></div>
<div class="ln" style="left:725px;top:550px;color:#4b5059">72</div>
<div class="m" style="left:885px;top:550px"><span class="cm"> * Stateless Article Screen that displays a single post adapting the UI to different screen sizes.</span></div>
<div class="ln" style="left:725px;top:594px;color:#4b5059">73</div>
<div class="m" style="left:885px;top:594px"><span class="cm"> *</span></div>
<div class="ln" style="left:725px;top:638px;color:#4b5059">74</div>
<div class="m" style="left:885px;top:638px"><span class="cm"> * </span><span class="tag">@param</span><span class="cm"> </span><span class="pn">post</span><span class="cm"> (state) item to display</span></div>
<div class="ln" style="left:725px;top:682px;color:#4b5059">75</div>
<div class="m" style="left:885px;top:682px"><span class="cm"> * </span><span class="tag">@param</span><span class="cm"> </span><span class="pn" style="text-decoration:underline wavy #9c8445;text-underline-offset:6px;text-decoration-thickness:1.5px">showNavigationIcon</span><span class="cm"> (state) if the navigation icon should be shown</span></div>
<div class="ln" style="left:725px;top:726px;color:#4b5059">76</div>
<div class="m" style="left:885px;top:726px"><span class="cm"> * </span><span class="tag">@param</span><span class="cm"> </span><span class="pn">onBack</span><span class="cm"> (event) request navigate back</span></div>
<div class="ln" style="left:725px;top:770px;color:#4b5059">77</div>
<div class="m" style="left:885px;top:770px"><span class="cm"> * </span><span class="tag">@param</span><span class="cm"> </span><span class="pn">isFavorite</span><span class="cm"> (state) is this item currently a favorite</span></div>
<div class="ln" style="left:725px;top:814px;color:#4b5059">78</div>
<div class="m" style="left:885px;top:814px"><span class="cm"> * </span><span class="tag">@param</span><span class="cm"> </span><span class="pn">onToggleFavorite</span><span class="cm"> (event) request that this post toggle it&#x27;s favorite state</span></div>
<div class="ln" style="left:725px;top:858px;color:#4b5059">79</div>
<div class="m" style="left:885px;top:858px"><span class="cm"> * </span><span class="tag">@param</span><span class="cm"> </span><span class="pn">lazyListState</span><span class="cm"> (state) the </span><span class="pn">[LazyListState]</span><span class="cm"> for the article content</span></div>
<div class="ln" style="left:725px;top:902px;color:#4b5059">80</div>
<div class="m" style="left:885px;top:902px"><span class="cm"> */</span></div>
<div class="ln" style="left:725px;top:946px;color:#4b5059">81</div>
<div class="m" style="left:885px;top:946px"><span class="an">@OptIn</span>(ExperimentalMaterial3Api::<span class="kw">class</span>)</div>
<div class="ln" style="left:725px;top:990px;color:#4b5059">82</div>
<div class="m" style="left:885px;top:990px"><span class="an">@Composable</span></div>
<div class="ln" style="left:725px;top:1034px;color:#4b5059">83</div>
<div class="m" style="left:885px;top:1034px"><span class="kw">fun</span> <span class="fn">ArticleScreen</span>(</div>
<div class="ln" style="left:725px;top:1078px;color:#4b5059">84</div>
<div class="m" style="left:885px;top:1078px">    post: Post,</div>
<div class="ln" style="left:725px;top:1122px;color:#4b5059">85</div>
<div class="m" style="left:885px;top:1122px">    isExpandedScreen: Boolean,</div>
<div class="ln" style="left:725px;top:1166px;color:#4b5059">86</div>
<div class="m" style="left:885px;top:1166px">    onBack: () -&gt; Unit,</div>
<div class="ln" style="left:725px;top:1210px;color:#4b5059">87</div>
<div class="m" style="left:885px;top:1210px">    isFavorite: Boolean,</div>
<div class="ln" style="left:725px;top:1254px;color:#4b5059">88</div>
<div class="m" style="left:885px;top:1254px">    onToggleFavorite: () -&gt; Unit,</div>
<div class="ln" style="left:725px;top:1298px;color:#4b5059">89</div>
<div class="m" style="left:885px;top:1298px">    modifier: Modifier = Modifier,</div>
<div class="ln" style="left:725px;top:1342px;color:#4b5059">90</div>
<div class="m" style="left:885px;top:1342px">    lazyListState: LazyListState = <span class="cp">rememberLazyListState</span>()</div>
<div class="ln" style="left:725px;top:1386px;color:#4b5059">91</div>
<div class="m" style="left:885px;top:1386px">) {</div>
<div class="ln" style="left:725px;top:1430px;color:#4b5059">92</div>
<div class="m" style="left:885px;top:1430px">    <span class="kw">var</span> <span class="ul">showUnimplementedActionDialog</span> <span class="kw">by</span> <span class="cp">rememberSaveable</span> <span class="br">{</span> <span class="it">mutableStateOf</span>(<span style="display:inline-block;width:87px;height:36px;vertical-align:middle;position:relative;top:-3px;margin:0 5px 0 3px;background:#2f3034;border-radius:7px;font-family:'Liberation Sans',sans-serif;font-size:24px;line-height:36px;color:#8e9197;text-align:center;font-style:normal;-webkit-text-stroke:0">value:</span><span class="kw">false</span>) <span class="br">}</span></div>
<div class="ln" style="left:725px;top:1474px;color:#4b5059">93</div>
<div class="m" style="left:885px;top:1474px">    <span class="kw">if</span> (<span class="ul">showUnimplementedActionDialog</span>) {</div>
<div class="ln" style="left:725px;top:1518px;color:#4b5059">94</div>
<div class="m" style="left:885px;top:1518px">        <span class="cp">FunctionalityNotAvailablePopup</span> <span class="br">{</span> <span class="ul">showUnimplementedActionDialog</span> = <span class="kw">false</span> <span class="br">}</span></div>
<div class="ln" style="left:725px;top:1562px;color:#4b5059">95</div>
<div class="m" style="left:885px;top:1562px">    }</div>
<svg style="left:0;top:0" width="2810" height="1818"><path d="M861.75,255.5 L869.25,263 L861.75,270.5" fill="none" stroke="#6f737a" stroke-width="2.2" stroke-linecap="round" stroke-linejoin="round"/></svg>
<svg style="left:0;top:0" width="2810" height="1818"><path d="M861.75,431.5 L869.25,439 L861.75,446.5" fill="none" stroke="#6f737a" stroke-width="2.2" stroke-linecap="round" stroke-linejoin="round"/></svg>
<div class="a" style="left:884px;top:244px;width:4px;height:36px;background:#ced0d6;border-radius:0px;"></div>
<svg style="left:896px;top:294px" width="32" height="34" viewBox="0 0 16 17"><path d="M8 1.2a4.6 4.6 0 0 0-2.6 8.4c.5.4.7.9.7 1.5h3.8c0-.6.2-1.1.7-1.5A4.6 4.6 0 0 0 8 1.2z" fill="#f2c55c"/><path d="M6 13h4M6.3 15h3.4" stroke="#ced0d6" stroke-width="1.1" stroke-linecap="round"/></svg>
<div class="a" style="left:943px;top:1516px;width:2px;height:44px;background:#393b40;border-radius:0px;"></div>
</div></div>
<div class="a" style="left:2398px;top:244px;width:214px;height:48px;background:#1e1f22;border-radius:0px;border-radius:9px 9px 0 0"></div>
<svg style="left:2413px;top:251px" width="26" height="26" viewBox="0 0 16 16"><path d="M8 1.5 15 14H1z" fill="#c9a55b" stroke="#c9a55b" stroke-width="1.5" stroke-linejoin="round"/><path d="M8 5.5v4.5" stroke="#1e1f22" stroke-width="1.8" stroke-linecap="round"/><circle cx="8" cy="12" r="1" fill="#1e1f22"/></svg>
<div class="t" style="left:2446px;top:245px;font-size:26px;color:#ced0d6;">2</div>
<svg style="left:2473px;top:251px" width="28" height="30" viewBox="0 0 16 17"><path d="M1.5 7.5l3.5 3.5L13.5 2" fill="none" stroke="#5fb865" stroke-width="1.6" stroke-linecap="round" stroke-linejoin="round"/><path d="M2 14.5l1.5-1.2 1.5 1.2 1.5-1.2 1.5 1.2 1.5-1.2" fill="none" stroke="#62a463" stroke-width="1" stroke-linecap="round"/></svg>
<div class="t" style="left:2506px;top:245px;font-size:26px;color:#ced0d6;">3</div>
<svg style="left:0;top:0" width="2810" height="1818"><path d="M2542.0,269.0 L2550,261.0 L2558.0,269.0" fill="none" stroke="#ced0d6" stroke-width="2.2" stroke-linecap="round" stroke-linejoin="round"/></svg>
<svg style="left:0;top:0" width="2810" height="1818"><path d="M2584.0,261.0 L2592,269.0 L2600.0,261.0" fill="none" stroke="#ced0d6" stroke-width="2.2" stroke-linecap="round" stroke-linejoin="round"/></svg>
<div class="a" style="left:2596px;top:297px;width:14px;height:182px;background:#3e4045;border-radius:7px;"></div>
<div class="a" style="left:2588px;top:355px;width:29px;height:4px;background:#c9a34a;border-radius:0px;"></div>
<div class="a" style="left:2588px;top:546px;width:29px;height:4px;background:#c9a34a;border-radius:0px;"></div>
<svg style="left:2636.0px;top:177.0px;" width="42" height="42" viewBox="0 0 16 16" fill="none" stroke="#ced0d6" stroke-width="1.0" stroke-linecap="round" stroke-linejoin="round"><path d="M3.5 11.5V7a4.5 4.5 0 0 1 9 0v4.5l1.5 1.5H2z"/><path d="M6.5 14.5a1.5 1.5 0 0 0 3 0"/></svg>
<div class="a" style="left:2664px;top:178px;width:14px;height:14px;border-radius:50%;background:#d8625b"></div>
<svg style="left:2637.0px;top:258.0px;" width="40" height="40" viewBox="0 0 16 16" fill="none" stroke="#ced0d6" stroke-width="1.15" stroke-linecap="round" stroke-linejoin="round"><path d="M.7 12.6C.7 8.2 3.6 5.1 7.5 5.1c2 0 3 .9 4.5.9 1.6 0 2.6-1.2 2.3-2.7-.3-1.2-1.5-1.6-2.3-.9M12.4 8.2c1.4-.4 2.4-1.6 2.4-3.1M.7 12.6c1.4 0 2.1-1.6 3.2-1.6 1 0 1.5 1 2.5 1 .9 0 1.6-1.4 2.5-1.7 1 .3 1.5 1.6 2.5 1.6.9 0 1.5-1 2-1.5M5 8.4c1-.9 2.4-1 3.5-.2"/></svg>
<svg style="left:2636.0px;top:339.0px;" width="42" height="42" viewBox="0 0 16 16" fill="none" stroke="#ced0d6" stroke-width="1.0" stroke-linecap="round" stroke-linejoin="round"><path d="M3 14V2.5a1 1 0 0 1 1-1h4.5a1 1 0 0 1 1 1V7M5 3.5h1.5M3 14h3"/><path d="M7 14.5a4 4 0 0 1 8 0z"/><path d="M8.5 10l-.8-1.3M13.5 10l.8-1.3"/></svg>
<svg style="left:2636.0px;top:418.0px;" width="42" height="42" viewBox="0 0 16 16" fill="none" stroke="#ced0d6" stroke-width="1.0" stroke-linecap="round" stroke-linejoin="round"><path d="M3 14V2.5a1 1 0 0 1 1-1h4.5a1 1 0 0 1 1 1V4M5 3.5h1.5M3 14h3"/><rect x="6" y="8.5" width="8.5" height="5" rx=".8"/><path d="M6 15.5h8.5"/></svg>
<div class="a" style="left:2662px;top:419px;width:16px;height:16px;border-radius:50%;background:#5fb865"></div>
<svg style="left:2636px;top:498px" width="42" height="42" viewBox="0 0 16 16"><path d="M8 1.5C8.4 5.5 10.5 7.6 14.5 8 10.5 8.4 8.4 10.5 8 14.5 7.6 10.5 5.5 8.4 1.5 8 5.5 7.6 7.6 5.5 8 1.5z" fill="#ced0d6"/></svg>
<svg style="left:2636.0px;top:578.0px;" width="42" height="42" viewBox="0 0 16 16" fill="none" stroke="#ced0d6" stroke-width="1.0" stroke-linecap="round" stroke-linejoin="round"><path d="M8.5 6V2.5a1 1 0 0 0-1-1H4a1 1 0 0 0-1 1V14h4"/><path d="M9.5 10.5l-1 1a1.8 1.8 0 0 0 2.5 2.5l1-1M12.5 11.5l1-1a1.8 1.8 0 0 0-2.5-2.5l-1 1M10 12l2-2"/></svg>
<div class="a" style="left:2634px;top:648px;width:48px;height:2px;background:#43454a;border-radius:0px;"></div>
<svg style="left:2636.0px;top:681.0px;" width="42" height="42" viewBox="0 0 16 16" fill="none" stroke="#ced0d6" stroke-width="1.0" stroke-linecap="round" stroke-linejoin="round"><path d="M8.5 6V2.5a1 1 0 0 0-1-1H4a1 1 0 0 0-1 1V14h3.5"/><circle cx="10.5" cy="10.5" r="2.5"/><path d="M12.3 12.3l2 2"/></svg>
<svg style="left:2637.0px;top:1548.5px;" width="42" height="42" viewBox="0 0 16 16" fill="none" stroke="#ced0d6" stroke-width="1.1" stroke-linecap="round" stroke-linejoin="round"><circle cx="8" cy="8" r="6.6"/><path d="M8 4.6v3.6" stroke-width="1.5"/><circle cx="8" cy="11.1" r=".55" fill="#ced0d6" stroke="none"/></svg>
<div class="a" style="left:140px;top:1631px;width:16px;height:16px;border:2px solid #548af7;background:#25324d;border-radius:4px"></div>
<div class="t" style="left:165px;top:1619px;font-size:27.5px;color:#a8abb0;">JetNews</div>
<svg style="left:0;top:0" width="2810" height="1818"><path d="M293.5,1632.0 L300.5,1639 L293.5,1646.0" fill="none" stroke="#9a9da3" stroke-width="2.2" stroke-linecap="round" stroke-linejoin="round"/></svg>
<div class="a" style="left:322px;top:1631px;width:16px;height:16px;border:2px solid #548af7;background:#25324d;border-radius:4px"></div>
<div class="t" style="left:346px;top:1619px;font-size:27.5px;color:#a8abb0;">app</div>
<svg style="left:0;top:0" width="2810" height="1818"><path d="M412.5,1632.0 L419.5,1639 L412.5,1646.0" fill="none" stroke="#9a9da3" stroke-width="2.2" stroke-linecap="round" stroke-linejoin="round"/></svg>
<div class="t" style="left:442px;top:1619px;font-size:27.5px;color:#a8abb0;">src</div>
<svg style="left:0;top:0" width="2810" height="1818"><path d="M498.5,1632.0 L505.5,1639 L498.5,1646.0" fill="none" stroke="#9a9da3" stroke-width="2.2" stroke-linecap="round" stroke-linejoin="round"/></svg>
<div class="a" style="left:527px;top:1631px;width:16px;height:16px;border:2px solid #548af7;background:#25324d;border-radius:4px"></div>
<div class="t" style="left:552px;top:1619px;font-size:27.5px;color:#a8abb0;">main</div>
<svg style="left:0;top:0" width="2810" height="1818"><path d="M630.5,1632.0 L637.5,1639 L630.5,1646.0" fill="none" stroke="#9a9da3" stroke-width="2.2" stroke-linecap="round" stroke-linejoin="round"/></svg>
<div class="t" style="left:659px;top:1619px;font-size:27.5px;color:#a8abb0;">java</div>
<svg style="left:0;top:0" width="2810" height="1818"><path d="M729.5,1632.0 L736.5,1639 L729.5,1646.0" fill="none" stroke="#9a9da3" stroke-width="2.2" stroke-linecap="round" stroke-linejoin="round"/></svg>
<div class="t" style="left:758px;top:1619px;font-size:27.5px;color:#a8abb0;">com</div>
<svg style="left:0;top:0" width="2810" height="1818"><path d="M830.5,1632.0 L837.5,1639 L830.5,1646.0" fill="none" stroke="#9a9da3" stroke-width="2.2" stroke-linecap="round" stroke-linejoin="round"/></svg>
<div class="t" style="left:860px;top:1619px;font-size:27.5px;color:#a8abb0;">example</div>
<svg style="left:0;top:0" width="2810" height="1818"><path d="M983.5,1632.0 L990.5,1639 L983.5,1646.0" fill="none" stroke="#9a9da3" stroke-width="2.2" stroke-linecap="round" stroke-linejoin="round"/></svg>
<div class="t" style="left:1011px;top:1619px;font-size:27.5px;color:#a8abb0;">jetnews</div>
<svg style="left:0;top:0" width="2810" height="1818"><path d="M1127.5,1632.0 L1134.5,1639 L1127.5,1646.0" fill="none" stroke="#9a9da3" stroke-width="2.2" stroke-linecap="round" stroke-linejoin="round"/></svg>
<div class="t" style="left:1156px;top:1619px;font-size:27.5px;color:#a8abb0;">ui</div>
<svg style="left:0;top:0" width="2810" height="1818"><path d="M1196.5,1632.0 L1203.5,1639 L1196.5,1646.0" fill="none" stroke="#9a9da3" stroke-width="2.2" stroke-linecap="round" stroke-linejoin="round"/></svg>
<div class="t" style="left:1226px;top:1619px;font-size:27.5px;color:#a8abb0;">article</div>
<svg style="left:0;top:0" width="2810" height="1818"><path d="M1321.5,1632.0 L1328.5,1639 L1321.5,1646.0" fill="none" stroke="#9a9da3" stroke-width="2.2" stroke-linecap="round" stroke-linejoin="round"/></svg>
<svg style="left:1349px;top:1624.0px" width="30" height="30" viewBox="0 0 16 16"><path d="M2 2h11.5L8 8l5.5 6H2z" fill="#2b2536" stroke="#b589ec" stroke-width="1.15" stroke-linejoin="round"/></svg>
<div class="t" style="left:1390px;top:1619px;font-size:27.5px;color:#a8abb0;">ArticleScreen.kt</div>
<div class="t" style="left:2184px;top:1619px;font-size:27.5px;color:#a8abb0;">1:1</div>
<div class="t" style="left:2249px;top:1619px;font-size:27.5px;color:#a8abb0;">LF</div>
<div class="t" style="left:2310px;top:1619px;font-size:27.5px;color:#a8abb0;">UTF-8</div>
<svg style="left:2423.0px;top:1624.0px;" width="30" height="30" viewBox="0 0 16 16" fill="none" stroke="#ced0d6" stroke-width="1.15" stroke-linecap="round" stroke-linejoin="round"><path d="M2.1 1.6h11.8a1 1 0 0 1 1 1V14.4l-3.4-3.2H2.1a1 1 0 0 1-1-1V2.6a1 1 0 0 1 1-1z"/><path d="M8 4.3v3.3"/><circle cx="8" cy="9.2" r=".35"/></svg>
<div class="t" style="left:2487px;top:1619px;font-size:27.5px;color:#a8abb0;">4 spaces</div>
<svg style="left:2635.0px;top:1624.0px;" width="30" height="30" viewBox="0 0 16 16" fill="none" stroke="#ced0d6" stroke-width="1.15" stroke-linecap="round" stroke-linejoin="round"><rect x="1" y="7" width="9.6" height="7.3" rx="1.5"/><path d="M7.9 7V4.9a2.9 2.9 0 0 1 5.8 0V6M5.8 9.7v2.1"/></svg>
</div></div>
<div class="a" style="left:112px;top:76px;width:2586px;height:1594px;border-radius:21px;border:2px solid #5f6064;border-top-color:#7e7e7f"></div></body></html>
